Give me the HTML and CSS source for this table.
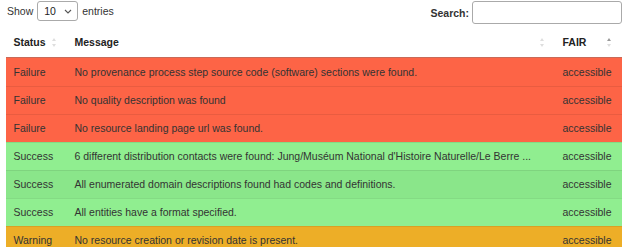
FILE: index.html
```html
<!DOCTYPE html>
<html lang="en">
<head>
<meta charset="utf-8">
<title>Checks</title>
<link rel="stylesheet" href="styles.css">
</head>
<body>
<div class="wrap">
  <div class="controls">
    <div class="length">
      <span>Show</span>
      <div class="select"><span>10</span><svg class="chev" width="8" height="5" viewBox="0 0 8 5"><path d="M1 1 L4 4 L7 1" fill="none" stroke="#555" stroke-width="1.1"/></svg></div>
      <span>entries</span>
    </div>
    <label class="search"><span>Search:</span><input type="text"></label>
  </div>
  <table class="grid">
    <colgroup><col class="c1"><col class="c2"><col class="c3"></colgroup>
    <thead>
      <tr>
        <th><div class="th"><span>Status</span><span class="sort"><i class="up"></i><i class="down"></i></span></div></th>
        <th><div class="th"><span>Message</span><span class="sort"><i class="up"></i><i class="down"></i></span></div></th>
        <th><div class="th"><span>FAIR</span><span class="sort asc"><i class="up"></i><i class="down"></i></span></div></th>
      </tr>
    </thead>
    <tbody>
      <tr class="fail first"><td>Failure</td><td>No provenance process step source code (software) sections were found.</td><td>accessible</td></tr>
      <tr class="fail"><td>Failure</td><td>No quality description was found</td><td>accessible</td></tr>
      <tr class="fail"><td>Failure</td><td>No resource landing page url was found.</td><td>accessible</td></tr>
      <tr class="ok"><td>Success</td><td>6 different distribution contacts were found: Jung/Muséum National d'Histoire Naturelle/Le Berre ...</td><td>accessible</td></tr>
      <tr class="ok hover"><td>Success</td><td>All enumerated domain descriptions found had codes and definitions.</td><td>accessible</td></tr>
      <tr class="ok"><td>Success</td><td>All entities have a format specified.</td><td>accessible</td></tr>
      <tr class="warn"><td>Warning</td><td>No resource creation or revision date is present.</td><td>accessible</td></tr>
    </tbody>
  </table>
</div>
</body>
</html>
```
FILE: styles.css
```css
html, body {
  margin: 0;
  padding: 0;
  background: #fff;
}
body {
  font-family: "Liberation Sans", Arial, sans-serif;
  font-size: 10.5px;
  color: #333;
}
.wrap {
  padding: 0 7px 0 6px;
}
.controls {
  display: flex;
  justify-content: space-between;
  align-items: flex-start;
  height: 26px;
}
.length {
  display: flex;
  align-items: center;
  gap: 4px;
  margin-top: 1px;
  margin-left: 1px;
  height: 20px;
  color: #333;
}
.select {
  box-sizing: border-box;
  width: 41px;
  height: 20px;
  border: 1px solid #aaa;
  border-radius: 3px;
  display: flex;
  align-items: center;
  justify-content: space-between;
  padding: 0 5px 0 6px;
  color: #222;
}
.chev { display: block; }
.search {
  display: flex;
  align-items: center;
  gap: 3px;
  margin-top: 1px;
  font-weight: bold;
  color: #333;
}
.search input {
  box-sizing: border-box;
  width: 150px;
  height: 23px;
  border: 1px solid #aaa;
  border-radius: 3px;
  margin: 0;
  padding: 0 4px;
  background: #fff;
  font: inherit;
}
.grid {
  width: 100%;
  margin-top: 2px;
  border-collapse: separate;
  border-spacing: 0;
  table-layout: fixed;
}
.c1 { width: 61px; }
.c3 { width: 67px; }
.grid th {
  padding: 7px 10px 7px 7.5px;
  line-height: 15px;
  text-align: left;
  font-weight: bold;
  color: #222;
  border-bottom: 1px solid #c86a58;
}
.th {
  display: flex;
  justify-content: space-between;
  align-items: center;
}
.sort {
  display: flex;
  flex-direction: column;
  gap: 3px;
  width: 5px;
}
.sort i {
  display: block;
  width: 0;
  height: 0;
  border-left: 2.5px solid transparent;
  border-right: 2.5px solid transparent;
}
.sort .up { border-bottom: 3.5px solid #dedede; }
.sort .down { border-top: 3.5px solid #dedede; }
.sort.asc .up { border-bottom-color: #999; }
.grid td {
  padding: 5px 7.5px 6px;
  line-height: 16px;
  border-top: 1px solid rgba(0, 0, 0, 0.08);
  white-space: nowrap;
  overflow: hidden;
  color: #333;
}
.grid tr.first td { border-top-color: transparent; }
.fail td { background: #fd6446; }
.ok td { background: #90ee90; }
.ok.hover td { background: #8ae68a; }
.warn td { background: #edae27; }
```
